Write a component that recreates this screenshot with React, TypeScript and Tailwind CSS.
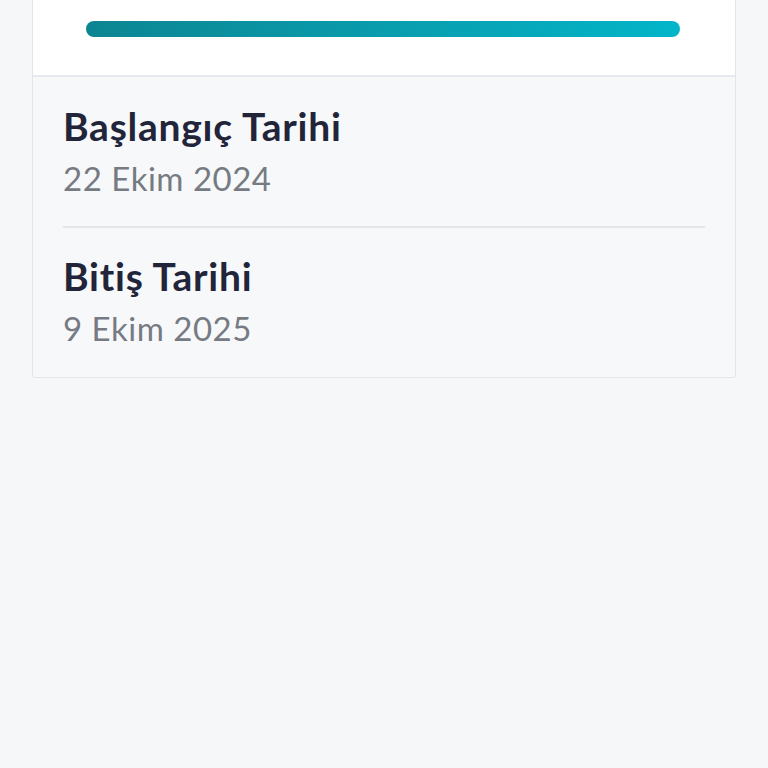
export default function App() {
  return (
    <div
      className="min-h-screen bg-[#f6f7f9] px-8"
      style={{ fontFamily: 'Lato, "Open Sans", sans-serif' }}
    >
      <div className="border-x border-b border-[#e2e5e9] rounded-b-[3px] overflow-hidden">
        {/* progress */}
        <div className="bg-white pl-[53px] pr-[55px] pt-[21px] pb-[38px] border-b-2 border-[#e6e9ed]">
          <div className="h-4 rounded-full bg-gradient-to-r from-[#0c8592] to-[#03b5c9]" />
        </div>

        {/* dates */}
        <div className="bg-[#f7f8fa] px-[30px]">
          <div className="pt-[24px] pb-[21px] border-b-2 border-[#e4e6ea]">
            <div className="text-[39px] leading-[50px] font-bold tracking-[0.75px] text-[#22253a]">Başlangıç Tarihi</div>
            <div className="text-[33px] leading-[54px] tracking-[0.5px] text-[#767b83]">22 Ekim 2024</div>
          </div>
          <div className="pt-[23px] pb-[22px]">
            <div className="text-[39px] leading-[50px] font-bold tracking-[0.75px] text-[#22253a]">Bitiş Tarihi</div>
            <div className="text-[33px] leading-[54px] tracking-[0.5px] text-[#767b83]">9 Ekim 2025</div>
          </div>
        </div>
      </div>
    </div>
  );
}
